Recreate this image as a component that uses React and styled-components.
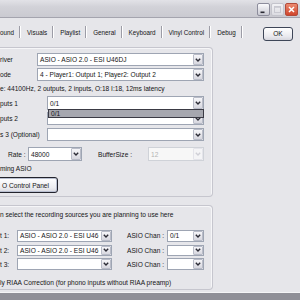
import React from 'react'
import styled, { createGlobalStyle } from 'styled-components'

const GlobalStyle = createGlobalStyle`
  html, body { margin: 0; padding: 0; }
  body { width: 300px; height: 300px; overflow: hidden; background: #e6e6ea; }
`

const Window = styled.div`
  width: 300px;
  height: 300px;
  overflow: hidden;
  background: #e6e6ea;
  display: flex;
  flex-direction: column;
  font-family: 'Liberation Sans', Arial, sans-serif;
  font-size: 6.6px;
  color: #151515;
`

const TitleBar = styled.div`
  height: 18px;
  flex: none;
  box-sizing: border-box;
  background: linear-gradient(#e2e2e7, #d2d2d8 40%, #cacad1);
  border-bottom: 1px solid #a4a4ae;
  display: flex;
  justify-content: flex-end;
  align-items: flex-start;
  gap: 1px;
  padding: 3px 2px 0 0;
`

const WinButton = styled.div`
  width: 13px;
  height: 13px;
  box-sizing: border-box;
  border-radius: 2px;
  border: 1px solid ${p => (p.kind === 'close' ? '#b24a3a' : p.kind === 'max' ? '#c4c4cc' : '#8d8d9c')};
  background: ${p =>
    p.kind === 'close'
      ? 'linear-gradient(#ec8a70, #d0452c)'
      : p.kind === 'max'
      ? 'linear-gradient(#f2f2f5, #dcdce2)'
      : 'linear-gradient(#fafafc, #c9c9d2)'};
  display: flex;
  align-items: center;
  justify-content: center;
`

const TabStrip = styled.div`
  height: 28px;
  flex: none;
  display: flex;
  align-items: center;
  padding-right: 7px;
`

const Tab = styled.span`
  white-space: nowrap;
  font-size: 6.3px;
  padding: 0 5px 0 6px;
  &:first-child { padding-left: 0; }
`

const TabSep = styled.span`
  width: 1px;
  height: 12px;
  background: #9c9ca6;
  border-right: 1px solid #fff;
`

const OkButton = styled.div`
  margin-left: auto;
  width: 30px;
  height: 14px;
  box-sizing: border-box;
  border: 1px solid #3e4658;
  border-radius: 3px;
  background: linear-gradient(#ffffff, #e9e9ee 70%, #d6d6de);
  display: flex;
  align-items: center;
  justify-content: center;
  margin-top: 3px;
`

const Body = styled.div`
  flex: 1;
  display: flex;
  flex-direction: column;
  width: 213px;
  padding-top: 1px;
  gap: 8px;
`

const Group = styled.div`
  height: ${p => p.h}px;
  box-sizing: border-box;
  border: 1px solid #c6c6ce;
  border-left: none;
  border-radius: 0 4px 4px 0;
  box-shadow: inset -1px 1px 0 #f6f6f8;
  padding: ${p => p.pt}px 8px 0 0;
  display: flex;
  flex-direction: column;
`

const FieldRow = styled.div`
  display: grid;
  grid-template-columns: ${p => p.label}px 1fr;
  align-items: center;
  height: ${p => p.h || 13}px;
  margin-top: ${p => p.mt || 0}px;
  position: relative;
`

const Label = styled.span`
  white-space: nowrap;
`

const Text = styled.div`
  height: ${p => p.h}px;
  line-height: ${p => p.h}px;
  white-space: nowrap;
  margin-top: ${p => p.mt || 0}px;
`

const SelectBox = styled.div`
  display: flex;
  height: 100%;
  box-sizing: border-box;
  background: ${p => (p.disabled ? '#f7f7f7' : '#fff')};
  border: 1px solid ${p => (p.disabled ? '#cfd2d8' : '#9ea5b3')};
  position: relative;
`

const SelectValue = styled.span`
  flex: 1;
  min-width: 0;
  padding-left: 2px;
  display: flex;
  align-items: center;
  white-space: nowrap;
  overflow: hidden;
  color: ${p => (p.disabled ? '#b4b4b4' : '#151515')};
`

const ArrowBtn = styled.span`
  width: 10px;
  flex: none;
  box-sizing: border-box;
  border: 1px solid ${p => (p.disabled ? '#e4e4ea' : '#b9bcc8')};
  border-radius: 1px;
  background: ${p => (p.disabled ? '#f4f4f6' : 'linear-gradient(#f6f6f9, #d7d7df)')};
  display: flex;
  align-items: center;
  justify-content: center;
`

const DropList = styled.div`
  position: absolute;
  left: 0;
  right: -1px;
  top: 100%;
  box-sizing: border-box;
  background: #fff;
  z-index: 2;
`

const DropItem = styled.div`
  height: 9px;
  box-sizing: border-box;
  background: #a6a7af;
  border: 1px solid #3a3a44;
  padding-left: 2px;
  display: flex;
  align-items: center;
`

const RateRow = styled.div`
  display: grid;
  grid-template-columns: 28px 54px 16px 50px 1fr;
  align-items: center;
  height: 14px;
  margin-top: 6px;
`

const RightLabel = styled.span`
  white-space: nowrap;
  padding-left: ${p => p.pl || 0}px;
`

const PanelButton = styled.div`
  margin-left: -12px;
  margin-top: 1px;
  width: 70px;
  height: 16px;
  box-sizing: border-box;
  border: 1px solid #22232c;
  border-radius: 3px;
  background: linear-gradient(#ffffff, #ececf0 70%, #d8d8df);
  box-shadow: inset 0 0 0 1px #b9bfd0;
  display: flex;
  align-items: center;
  justify-content: flex-end;
  padding-right: 8px;
  white-space: nowrap;
`

const SourceRow = styled.div`
  display: grid;
  grid-template-columns: 17px 95px 15px 40px 1fr;
  align-items: center;
  height: 12px;
  margin-top: ${p => p.mt || 0}px;
`

const BottomBar = styled.div`
  margin-top: auto;
  height: 7px;
  flex: none;
  background: #8f8f97;
  border-top: 1px solid #f4f4f6;
`

const Chevron = ({ disabled }) => (
  <svg width="6" height="4" viewBox="0 0 6 4">
    <polyline points="0.8,0.8 3,3 5.2,0.8" fill="none" stroke={disabled ? '#cfcfd6' : '#2b2b35'} strokeWidth="1.4" />
  </svg>
)

const Select = ({ value, disabled, children }) => (
  <SelectBox disabled={disabled}>
    <SelectValue disabled={disabled}>{value}</SelectValue>
    <ArrowBtn disabled={disabled}>
      <Chevron disabled={disabled} />
    </ArrowBtn>
    {children}
  </SelectBox>
)

const tabs = ['ound', 'Visuals', 'Playlist', 'General', 'Keyboard', 'Vinyl Control', 'Debug']

const sources = [
  { label: 't 1:', value: 'ASIO - ASIO 2.0 - ESI U46', chan: '0/1', mt: 0 },
  { label: 't 2:', value: 'ASIO - ASIO 2.0 - ESI U46', chan: '', mt: 3 },
  { label: 't 3:', value: '', chan: '', mt: 2 },
]

export default function App() {
  return (
    <Window>
      <GlobalStyle />
      <TitleBar>
        <WinButton kind="min">
          <svg width="7" height="9" viewBox="0 0 7 9">
            <rect x="0.5" y="6.5" width="4" height="1.6" fill="#2a2a34" />
          </svg>
        </WinButton>
        <WinButton kind="max">
          <svg width="7" height="7" viewBox="0 0 7 7">
            <rect x="0.5" y="0.5" width="6" height="6" fill="none" stroke="#c8c8d0" />
            <line x1="0.5" y1="1.3" x2="6.5" y2="1.3" stroke="#c8c8d0" />
          </svg>
        </WinButton>
        <WinButton kind="close">
          <svg width="7" height="7" viewBox="0 0 7 7">
            <path d="M1 1 L6 6 M6 1 L1 6" stroke="#fff" strokeWidth="1.5" />
          </svg>
        </WinButton>
      </TitleBar>

      <TabStrip>
        {tabs.map(t => (
          <React.Fragment key={t}>
            <Tab>{t}</Tab>
            <TabSep />
          </React.Fragment>
        ))}
        <OkButton>OK</OkButton>
      </TabStrip>

      <Body>
        <Group h={150} pt={5}>
          <FieldRow label={37}>
            <Label>river</Label>
            <Select value="ASIO - ASIO 2.0 - ESI U46DJ" />
          </FieldRow>
          <FieldRow label={37} mt={2}>
            <Label>ode</Label>
            <Select value="4 - Player1: Output 1; Player2: Output 2" />
          </FieldRow>
          <Text h={15}>e: 44100Hz, 2 outputs, 2 inputs, O:18 I:18, 12ms latency</Text>
          <FieldRow label={47} h={14}>
            <Label>puts 1</Label>
            <Select value="0/1">
              <DropList>
                <DropItem>0/1</DropItem>
              </DropList>
            </Select>
          </FieldRow>
          <FieldRow label={47} mt={2}>
            <Label>puts 2</Label>
            <Select value="" />
          </FieldRow>
          <FieldRow label={47} mt={3}>
            <Label>s 3 (Optional)</Label>
            <Select value="" />
          </FieldRow>
          <RateRow>
            <RightLabel pl={8}>Rate :</RightLabel>
            <Select value="48000" />
            <span />
            <RightLabel>BufferSize :</RightLabel>
            <Select value="12" disabled />
          </RateRow>
          <Text h={15}>ming ASIO</Text>
          <PanelButton>O Control Panel</PanelButton>
        </Group>

        <Group h={85} pt={3}>
          <Text h={12}>n select the recording sources you are planning to use here</Text>
          <div style={{ height: 9 }} />
          {sources.map(s => (
            <SourceRow key={s.label} mt={s.mt}>
              <Label>{s.label}</Label>
              <Select value={s.value} />
              <span />
              <Label>ASIO Chan :</Label>
              <Select value={s.chan} />
            </SourceRow>
          ))}
          <Text h={12} mt={7}>ly RIAA Correction (for phono inputs without RIAA preamp)</Text>
        </Group>
      </Body>
      <BottomBar />
    </Window>
  )
}
